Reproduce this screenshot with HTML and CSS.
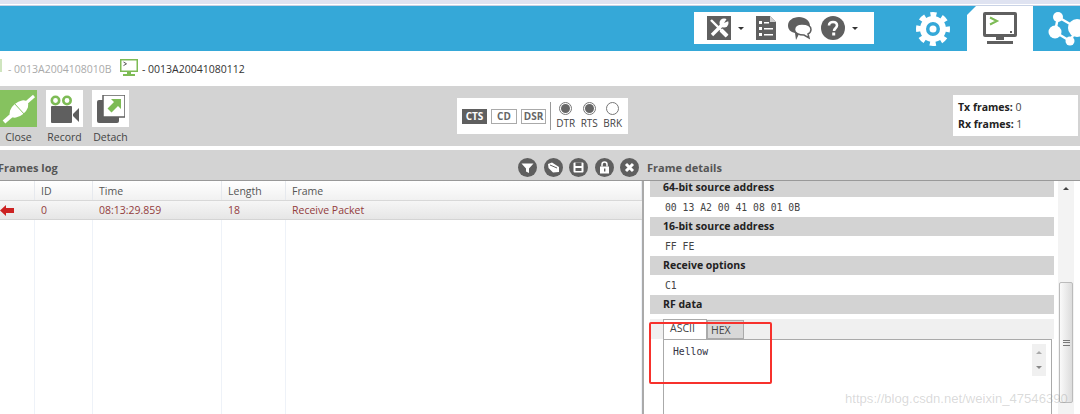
FILE: index.html
```html
<!DOCTYPE html>
<html lang="en">
<head>
    <meta charset="UTF-8">
    <title>XCTU Console</title>
    <link rel="stylesheet" href="styles.css">
</head>
<body>
<div class="app">

    <div class="window-edge"></div>

    <!-- blue top bar -->
    <div class="topbar">
        <div class="tools">
            <svg class="tool-wrench" width="24" height="24" viewBox="0 0 24 24">
                <rect width="24" height="24" fill="#5f5f5f"/>
                <path d="M4 4 L20 20" stroke="#fff" stroke-width="2.400"/>
                <path d="M14 14 L20 20" stroke="#fff" stroke-width="4"/>
                <path d="M5 19 L15 9" stroke="#fff" stroke-width="3.400"/>
                <circle cx="17" cy="7" r="4.500" fill="#fff"/>
                <path d="M17 7 L21 1 L24 4 Z" fill="#5f5f5f"/>
            </svg>
            <span class="caret"></span>
            <svg class="tool-doc" width="20" height="24" viewBox="0 0 20 24">
                <path d="M0 0 H14 L20 6 V24 H0 Z" fill="#5f5f5f"/>
                <path d="M14 0 L20 6 H14 Z" fill="#cfcfcf"/>
                <path d="M3 5 H6 V8 H3 Z M8 6 H13 V7.500 H8 Z M3 11 H6 V14 H3 Z M8 12 H17 V13.500 H8 Z M3 17 H6 V20 H3 Z M8 18 H17 V19.500 H8 Z" fill="#fff"/>
            </svg>
            <svg class="tool-chat" width="26" height="25" viewBox="0 0 26 25">
                <path d="M12 1 C18 1 23 4.500 23 10 C23 15 18 18 12 18 L9 24 L8 17 C3.500 16 1 13.500 1 9.500 C1 4.500 6 1 12 1 Z" fill="#5f5f5f"/>
                <path d="M15 8 C20 8 24 10 24 13.500 C24 15.500 23 17 21 18 L22 22 L17 19 C12 19 7.500 17 7.500 13.500 C7.500 10 11 8 15 8 Z" fill="#fff" stroke="#5f5f5f" stroke-width="1.500"/>
            </svg>
            <svg class="tool-help" width="24" height="24" viewBox="0 0 24 24">
                <circle cx="12" cy="12" r="12" fill="#5f5f5f"/>
                <path d="M8 9.500 C8 7 10 6 12 6 C14.500 6 16 7.500 16 9.500 C16 12 13 12.500 13 15" fill="none" stroke="#fff" stroke-width="2.600"/>
                <rect x="11.200" y="16.500" width="3" height="3" fill="#fff"/>
            </svg>
            <span class="caret"></span>
        </div>
        <svg class="gear" width="36" height="36" viewBox="0 0 36 36">
            <circle cx="18" cy="18" r="10" fill="none" stroke="#fff" stroke-width="6"/>
            <circle cx="18" cy="18" r="14.500" fill="none" stroke="#fff" stroke-width="5" stroke-dasharray="6 5.390" stroke-dashoffset="3"/>
            <circle cx="18" cy="18" r="3.500" fill="#fff"/>
        </svg>
        <div class="tab-active">
            <svg width="34" height="34" viewBox="0 0 34 34">
                <path d="M2 0 H32 Q34 0 34 2 V23 Q34 25 32 25 H2 Q0 25 0 23 V2 Q0 0 2 0 Z" fill="#5f5f5f"/>
                <rect x="3" y="3" width="28" height="19" fill="#fff"/>
                <path d="M7 5.500 L14 9 L7 12.500" fill="none" stroke="#7dbb55" stroke-width="2"/>
                <rect x="27" y="19" width="2" height="2" fill="#5f5f5f"/>
                <path d="M13 25 H21 V28 H13 Z" fill="#5f5f5f"/>
                <rect x="4" y="29" width="26" height="3" fill="#5f5f5f"/>
            </svg>
        </div>
        <svg class="share" width="40" height="38" viewBox="0 0 40 38">
            <path d="M7 21 L10 6 M7 21 L22 30 M10 6 L29 17 M22 30 L29 17" fill="none" stroke="#fff" stroke-width="2.500"/>
            <circle cx="7" cy="21" r="6.500" fill="#fff"/>
            <circle cx="10" cy="6" r="5" fill="#fff"/>
            <circle cx="22" cy="30" r="4.500" fill="#fff"/>
            <circle cx="29" cy="17" r="9" fill="#fff"/>
        </svg>
    </div>

    <!-- device list -->
    <div class="devices">
        <svg class="device-icon device-off" width="18" height="18" viewBox="0 0 18 18">
            <path d="M0 0 H18 V13 H0 Z" fill="#cfe5bf"/>
            <rect x="2" y="2" width="14" height="9" fill="#fff"/>
            <rect x="4" y="15" width="10" height="2" fill="#cfe5bf"/>
        </svg>
        <span class="device-name muted">- 0013A2004108010B</span>
        <svg class="device-icon" width="18" height="18" viewBox="0 0 18 18">
            <path d="M0 0 H18 V13 H0 Z" fill="#7dbb55"/>
            <rect x="1.500" y="1.500" width="15" height="10" fill="#fff"/>
            <path d="M3.500 3 L6.500 4.800 L3.500 6.600" fill="none" stroke="#555" stroke-width="1"/>
            <rect x="7" y="13" width="4" height="2" fill="#7dbb55"/>
            <rect x="3" y="15" width="12" height="2" fill="#7dbb55"/>
        </svg>
        <span class="device-name">- 0013A20041080112</span>
    </div>

    <!-- toolbar -->
    <div class="toolbar">
        <div class="actions">
            <div class="action">
                <div class="tile tile-green">
                    <svg width="36" height="36" viewBox="0 0 36 36">
                        <path d="M3 31 L11 24" stroke="#fff" stroke-width="4"/>
                        <path d="M25 12 L33 5" stroke="#fff" stroke-width="3"/>
                        <ellipse cx="18" cy="18" rx="11" ry="6.500" transform="rotate(-40 18 18)" fill="#fff"/>
                        <path d="M13 12 L24 24" stroke="#86c25f" stroke-width="1"/>
                    </svg>
                </div>
                <span>Close</span>
            </div>
            <div class="action">
                <div class="tile">
                    <svg width="30" height="28" viewBox="0 0 30 28">
                        <circle cx="5.500" cy="5.500" r="3.700" fill="none" stroke="#7dbb55" stroke-width="2.600"/>
                        <circle cx="17" cy="5.500" r="3.700" fill="none" stroke="#7dbb55" stroke-width="2.600"/>
                        <rect x="1" y="11" width="21" height="17" rx="1" fill="#5f5f5f"/>
                        <path d="M23 19 L29 13 V27 L23 21 Z" fill="#5f5f5f"/>
                    </svg>
                </div>
                <span>Record</span>
            </div>
            <div class="action">
                <div class="tile">
                    <svg width="28" height="28" viewBox="0 0 28 28">
                        <rect x="0" y="5" width="22" height="23" rx="2" fill="#5f5f5f"/>
                        <rect x="6" y="0" width="22" height="22" fill="#fff" stroke="#5f5f5f" stroke-width="1.500"/>
                        <rect x="9.500" y="4" width="15" height="14" fill="#fff"/>
                        <path d="M14 4 H24 V14 L21 11 L14.500 17.500 L10.500 13.500 L17 7 Z" fill="#7dbb55"/>
                    </svg>
                </div>
                <span>Detach</span>
            </div>
        </div>

        <div class="lines">
            <span class="line-box on">CTS</span>
            <span class="line-box wide">CD</span>
            <span class="line-box">DSR</span>
            <span class="lines-sep"></span>
            <div class="radio-wrap"><span class="radio on"></span><span>DTR</span></div>
            <div class="radio-wrap"><span class="radio on"></span><span>RTS</span></div>
            <div class="radio-wrap"><span class="radio"></span><span>BRK</span></div>
        </div>

        <div class="counters">
            <div><b>Tx frames:</b> 0</div>
            <div><b>Rx frames:</b> 1</div>
        </div>
    </div>

    <!-- section titles -->
    <div class="panel-head">
        <div class="panel-head-left">
            <b class="frames-title">Frames log</b>
            <div class="round-icons">
                <svg width="19" height="19" viewBox="0 0 19 19"><circle cx="9.500" cy="9.500" r="9.500" fill="#5f5f5f"/><path d="M3.500 5.500 H15.500 L11 10.500 V15 L8 13.500 V10.500 Z" fill="#fff"/></svg>
                <svg width="19" height="19" viewBox="0 0 19 19"><circle cx="9.500" cy="9.500" r="9.500" fill="#5f5f5f"/><path d="M4 6 L8 4.500 L15 9 V14 L9 14.500 L4.500 10 Z" fill="#fff"/><path d="M6 7 L13 10" stroke="#5f5f5f" stroke-width="1"/></svg>
                <svg width="19" height="19" viewBox="0 0 19 19"><circle cx="9.500" cy="9.500" r="9.500" fill="#5f5f5f"/><rect x="4.500" y="4.500" width="10" height="10" rx="1" fill="#fff"/><rect x="6.500" y="4.500" width="6" height="3.500" fill="#5f5f5f"/><rect x="6.500" y="10" width="6" height="3" fill="#5f5f5f"/></svg>
                <svg width="19" height="19" viewBox="0 0 19 19"><circle cx="9.500" cy="9.500" r="9.500" fill="#5f5f5f"/><rect x="5" y="8.500" width="9" height="7" fill="#fff"/><path d="M7 8.500 V6.500 A2.500 2.500 0 0 1 12 6.500 V8.500" fill="none" stroke="#fff" stroke-width="1.500"/><rect x="9" y="10.500" width="1.400" height="3" fill="#5f5f5f"/></svg>
                <svg width="19" height="19" viewBox="0 0 19 19"><circle cx="9.500" cy="9.500" r="9.500" fill="#5f5f5f"/><path d="M6 6 L13 13 M13 6 L6 13" stroke="#fff" stroke-width="3"/></svg>
            </div>
        </div>
        <b class="details-title">Frame details</b>
    </div>

    <div class="panes">
        <!-- frames table -->
        <div class="log">
            <div class="log-row log-head">
                <div></div><div>ID</div><div>Time</div><div>Length</div><div>Frame</div>
            </div>
            <div class="log-row log-item">
                <div class="arrow-cell">
                    <svg width="14" height="11" viewBox="0 0 14 11"><path d="M0 5.500 L6 0 V3 H14 V8 H6 V11 Z" fill="#cc2222"/></svg>
                </div>
                <div>0</div><div>08:13:29.859</div><div>18</div><div>Receive Packet</div>
            </div>
            <div class="log-row log-fill">
                <div></div><div></div><div></div><div></div><div></div>
            </div>
        </div>

        <!-- frame details -->
        <div class="details">
            <div class="details-body">
                <div class="field-head first">64-bit source address</div>
                <div class="field-value">00 13 A2 00 41 08 01 0B</div>
                <div class="field-head">16-bit source address</div>
                <div class="field-value">FF FE</div>
                <div class="field-head">Receive options</div>
                <div class="field-value">C1</div>
                <div class="field-head">RF data</div>
                <div class="rf-tabs">
                    <span class="rf-tab active">ASCII</span>
                    <span class="rf-tab">HEX</span>
                </div>
                <div class="rf-box">
                    <span class="rf-text">Hellow</span>
                    <div class="mini-scroll">
                        <span class="tri up"></span>
                        <span class="tri down"></span>
                    </div>
                </div>
            </div>
            <div class="scrollbar">
                <span class="tri up dark"></span>
                <div class="thumb"><span class="grip"></span></div>
            </div>
        </div>
    </div>

    <div class="red-mark"></div>
    <div class="watermark">https://blog.csdn.net/weixin_47546390</div>
</div>
</body>
</html>
```

FILE: styles.css
```css
* {
    box-sizing: border-box;
}

html, body {
    margin: 0;
    padding: 0;
}

body {
    font-family: "Open Sans", "Noto Sans", Arial, sans-serif;
    font-size: 10.5px;
    color: #555;
    background: #fff;
}

svg {
    display: block;
    flex: none;
}

.app {
    position: relative;
    display: flex;
    flex-direction: column;
    width: 1080px;
    height: 414px;
    overflow: hidden;
}

.window-edge {
    height: 6px;
    flex: none;
    background: #fff;
    border-top: 4px solid #dfe3f1;
    border-bottom: 1px solid #c9d3e6;
}

/* top bar */
.topbar {
    display: flex;
    align-items: stretch;
    height: 45px;
    flex: none;
    padding-left: 694px;
    background: #35a8d8;
}

.tools {
    display: flex;
    align-items: center;
    flex: none;
    width: 180px;
    height: 32px;
    margin-top: 6px;
    padding-left: 13px;
    background: #fff;
}

.caret {
    width: 0;
    height: 0;
    margin-left: 7px;
    border-style: solid;
    border-width: 3px 3px 0 3px;
    border-color: #333 transparent transparent transparent;
}

.tool-doc {
    margin-left: 12px;
}

.tool-chat {
    margin-left: 11px;
}

.tool-help {
    margin-left: 8px;
}

.gear {
    margin: 5px 0 0 41px;
}

.tab-active {
    flex: none;
    width: 66px;
    margin-left: 16px;
    padding: 6px 0 0 16px;
    background: #fff;
    clip-path: polygon(9px 0, 100% 0, 100% 100%, 0 100%, 0 9px);
}

.share {
    margin: 5px 0 0 15px;
}

/* devices */
.devices {
    display: flex;
    align-items: center;
    height: 35px;
    flex: none;
    font-size: 10.5px;
    color: #333;
}

.device-off {
    margin-left: -16px;
}

.device-icon {
    margin-top: -2px;
}

.device-name {
    margin-left: 4px;
}

.device-name.muted {
    width: 112px;
    margin-left: 6px;
    color: #aaa;
}

/* toolbar */
.toolbar {
    position: relative;
    display: flex;
    align-items: flex-start;
    height: 60px;
    flex: none;
    background: #d3d3d3;
}

.actions {
    display: flex;
    gap: 9px;
    width: 457px;
    padding-top: 4px;
}

.action {
    display: flex;
    flex-direction: column;
    align-items: center;
    gap: 3px;
    width: 37px;
    color: #444;
}

.tile {
    display: flex;
    align-items: center;
    justify-content: center;
    width: 37px;
    height: 37px;
    background: #fff;
}

.tile-green {
    background: #86c25f;
}

.lines {
    display: flex;
    align-items: center;
    width: 171px;
    height: 36px;
    margin-top: 12px;
    padding-left: 5px;
    background: #fff;
}

.line-box {
    width: 25px;
    height: 15px;
    margin-right: 4px;
    border: 1px solid #aaa;
    font-size: 10px;
    font-weight: 700;
    line-height: 13px;
    text-align: center;
    color: #666;
}

.line-box.wide {
    width: 26px;
}

.line-box.on {
    background: #5f5f5f;
    border-color: #5f5f5f;
    color: #fff;
}

.lines-sep {
    width: 1px;
    height: 28px;
    margin-right: 3px;
    background: #999;
}

.radio-wrap {
    display: flex;
    flex-direction: column;
    align-items: center;
    gap: 1px;
    width: 23.500px;
    font-size: 10px;
    color: #444;
}

.radio {
    display: flex;
    align-items: center;
    justify-content: center;
    width: 13px;
    height: 13px;
    border: 1px solid #777;
    border-radius: 50%;
    background: #fff;
}

.radio.on::after {
    content: "";
    width: 9px;
    height: 9px;
    border-radius: 50%;
    background: #666;
}

.counters {
    display: flex;
    flex-direction: column;
    justify-content: center;
    gap: 3px;
    width: 125px;
    height: 41px;
    margin: 9px 0 0 325px;
    padding-left: 5px;
    background: #fff;
    color: #444;
}

.counters b {
    color: #222;
}

/* panel titles */
.panel-head {
    display: flex;
    align-items: center;
    height: 35px;
    flex: none;
    padding-top: 5px;
    background: #d3d3d3;
    border-top: 4px solid #fff;
    border-bottom: 1px solid #999;
    font-size: 11px;
    color: #555;
}

.panel-head-left {
    display: flex;
    align-items: center;
    justify-content: space-between;
    width: 647px;
    padding-right: 8px;
}

.frames-title {
    margin-left: -2px;
}

.round-icons {
    display: flex;
    gap: 6.500px;
}

.panes {
    display: flex;
    flex: 1;
    min-height: 0;
}

/* frames table */
.log {
    display: flex;
    flex-direction: column;
    width: 644px;
    flex: none;
    border-right: 2px solid #aaa;
}

.log-row {
    display: grid;
    grid-template-columns: 35px 58px 129px 64px 1fr;
    flex: none;
}

.log-row > div {
    display: flex;
    align-items: center;
    padding-left: 6px;
}

.log-head {
    height: 20px;
    background: linear-gradient(#fff, #f1f1f1);
    border-bottom: 1px solid #d8d8d8;
    color: #555;
}

.log-head > div {
    border-right: 1px solid #e6e9ee;
}

.log-item {
    height: 19px;
    background: linear-gradient(#f6f6f6, #e6e6e6);
    border-bottom: 1px solid #d4d4d4;
    color: #933c3c;
}

.log-row > .arrow-cell {
    padding-left: 0;
}

.log-fill {
    flex: 1;
}

.log-fill > div {
    border-right: 1px solid #eef2f8;
}

/* frame details */
.details {
    display: flex;
    flex: 1;
    min-width: 0;
    padding-left: 6px;
}

.details-body {
    position: relative;
    width: 404px;
    flex: none;
}

.field-head {
    height: 19px;
    padding-left: 13px;
    background: #d3d3d3;
    font-weight: 700;
    font-size: 10.5px;
    line-height: 19px;
    color: #222;
}

.field-head.first {
    height: 16px;
    line-height: 12px;
}

.field-value {
    height: 20px;
    padding: 1px 0 0 15px;
    font-family: "DejaVu Sans Mono", monospace;
    font-size: 9.750px;
    line-height: 19px;
    color: #444;
}

.rf-tabs {
    display: flex;
    align-items: flex-end;
    height: 25px;
    padding: 5px 0 0 13px;
    background: linear-gradient(#fff 5px, #f0f0f0 5px);
}

.rf-tab {
    width: 37px;
    height: 19px;
    padding-left: 3px;
    border: 1px solid #aaa;
    background: #d8d8d8;
    font-size: 10.500px;
    line-height: 18px;
    color: #444;
}

.rf-tab.active {
    width: 44px;
    height: 20px;
    padding-left: 6px;
    border-bottom: 0;
    background: #fff;
    line-height: 16px;
}

.rf-box {
    position: relative;
    height: 80px;
    margin: 0 2px 0 13px;
    padding: 6px 0 0 9px;
    background: #fff;
    border: 1px solid #aaa;
    border-bottom: 0;
    font-family: "DejaVu Sans Mono", monospace;
    font-size: 9.750px;
    color: #334;
}

.mini-scroll {
    position: absolute;
    top: 4px;
    right: 5px;
    display: flex;
    flex-direction: column;
    align-items: center;
    justify-content: space-between;
    width: 14px;
    height: 32px;
    padding: 7px 0;
    background: #f0f0f0;
}

.tri {
    width: 0;
    height: 0;
    border-style: solid;
}

.tri.up {
    border-width: 0 3px 3px 3px;
    border-color: transparent transparent #aaa transparent;
}

.tri.down {
    border-width: 3px 3px 0 3px;
    border-color: #888 transparent transparent transparent;
}

.tri.dark {
    border-bottom-color: #444;
}

.scrollbar {
    display: flex;
    flex-direction: column;
    align-items: center;
    width: 16px;
    margin-left: 4px;
    padding-top: 6px;
    background: #f3f3f3;
}

.thumb {
    display: flex;
    align-items: center;
    justify-content: center;
    width: 14px;
    height: 121px;
    margin-top: 92px;
    background: linear-gradient(90deg, #fafafa, #dcdcdc);
    border: 1px solid #bbb;
    border-radius: 2px;
}

.grip {
    width: 7px;
    height: 6px;
    border-top: 1px solid #777;
    border-bottom: 1px solid #777;
    background: linear-gradient(#777, #777) center / 100% 1px no-repeat;
}

/* overlays */
.red-mark {
    position: absolute;
    left: 649px;
    top: 322px;
    width: 123px;
    height: 62px;
    border: 2px solid #f7312c;
    border-radius: 2px;
}

.watermark {
    position: absolute;
    left: 845px;
    top: 391px;
    font-family: "Liberation Sans", Arial, sans-serif;
    font-size: 13.100px;
    white-space: nowrap;
    color: rgba(140, 140, 140, 0.32);
}
```
